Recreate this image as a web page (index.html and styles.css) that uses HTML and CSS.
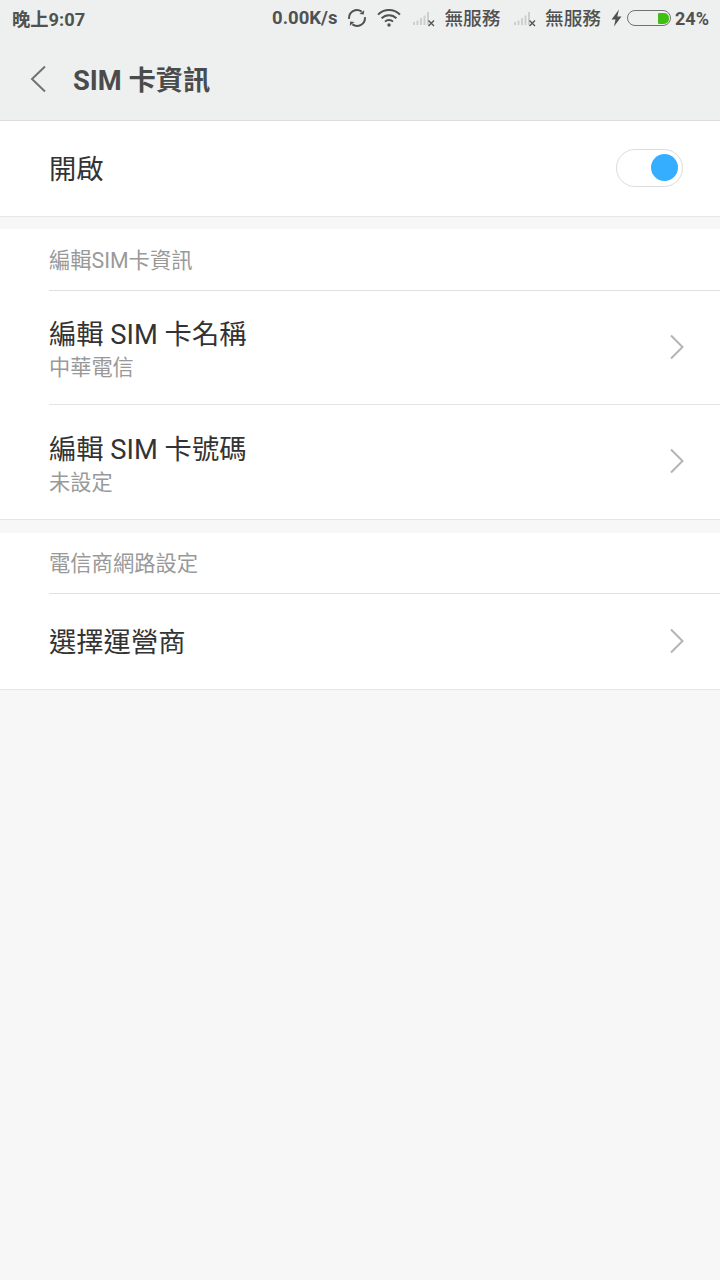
FILE: index.html
```html
<!DOCTYPE html>
<html lang="zh-Hant">
<head>
<meta charset="utf-8">
<title>SIM 卡資訊</title>
<link rel="stylesheet" href="styles.css">
</head>
<body>
<header class="top">
  <div class="status">
    <span class="time">晚上9:07</span>
    <div class="status-right">
      <span class="speed">0.00K/s</span>
      <svg class="ic-sync" width="20" height="20" viewBox="0 0 20 20" fill="none" stroke="#505252" stroke-width="2"><path d="M2.100 10.800A7.900 7.900 0 0 1 14.600 3.600"/><path d="M17.900 9.200A7.900 7.900 0 0 1 5.400 16.400"/><path d="M17.200 2.200l-.4 4.300-4.300-.6z" fill="#505252" stroke="none"/><path d="M2.800 17.800l.4-4.300 4.300.6z" fill="#505252" stroke="none"/></svg>
      <svg class="ic-wifi" width="24" height="18" viewBox="0 0 24 18" fill="none" stroke="#505252" stroke-width="2"><path d="M1 5.600a15.600 15.600 0 0 1 22 0"/><path d="M4.600 9.200a10.500 10.500 0 0 1 14.800 0"/><path d="M8 12.600a5.600 5.600 0 0 1 8 0"/><circle cx="12" cy="16" r="1.700" fill="#505252" stroke="none"/></svg>
      <svg class="ic-signal" width="24" height="18" viewBox="0 0 24 18"><g fill="#cdcfcf"><rect x="1" y="13" width="2" height="3"/><rect x="4.500" y="11.500" width="2" height="4.500"/><rect x="8" y="9" width="2" height="7"/><rect x="11.500" y="6.500" width="2" height="9.500"/><rect x="15" y="3" width="2" height="13"/></g><path d="M16.500 11.500l5.500 5.500m0-5.500l-5.500 5.500" stroke="#505252" stroke-width="1.300"/></svg>
      <span class="carrier">無服務</span>
      <svg class="ic-signal ic-signal-2" width="24" height="18" viewBox="0 0 24 18"><g fill="#cdcfcf"><rect x="1" y="13" width="2" height="3"/><rect x="4.500" y="11.500" width="2" height="4.500"/><rect x="8" y="9" width="2" height="7"/><rect x="11.500" y="6.500" width="2" height="9.500"/><rect x="15" y="3" width="2" height="13"/></g><path d="M16.500 11.500l5.500 5.500m0-5.500l-5.500 5.500" stroke="#505252" stroke-width="1.300"/></svg>
      <span class="carrier">無服務</span>
      <svg class="ic-bolt" width="11" height="18" viewBox="0 0 11 18"><path d="M8 .5L.5 10.500h4L3 17.500l7.500-10h-4.200z" fill="#505252"/></svg>
      <span class="battery"><span class="battery-fill"></span></span>
      <span class="percent">24%</span>
    </div>
  </div>
  <div class="titlebar">
    <svg class="back" width="18" height="28" viewBox="0 0 18 28" fill="none" stroke="#707272" stroke-width="2"><path d="M16 1.500L3 14l13 12.500"/></svg>
    <h1 class="title">SIM 卡資訊</h1>
  </div>
</header>

<main>
  <section class="card">
    <div class="row row-switch">
      <span class="row-title">開啟</span>
      <span class="switch"><span class="knob"></span></span>
    </div>
  </section>

  <section class="card card-wide-gap">
    <div class="group-label group-label-a">編輯SIM卡資訊</div>
    <div class="row row-tall">
      <div class="row-text">
        <span class="row-title">編輯 SIM 卡名稱</span>
        <span class="row-sub">中華電信</span>
      </div>
      <svg class="chevron" width="16" height="26" viewBox="0 0 16 26" fill="none" stroke="#b4b4b4" stroke-width="2"><path d="M2 1.500L13.500 13 2 24.500"/></svg>
    </div>
    <div class="row row-tall row-last">
      <div class="row-text">
        <span class="row-title">編輯 SIM 卡號碼</span>
        <span class="row-sub">未設定</span>
      </div>
      <svg class="chevron" width="16" height="26" viewBox="0 0 16 26" fill="none" stroke="#b4b4b4" stroke-width="2"><path d="M2 1.500L13.500 13 2 24.500"/></svg>
    </div>
  </section>

  <section class="card">
    <div class="group-label">電信商網路設定</div>
    <div class="row row-plain row-last">
      <span class="row-title">選擇運營商</span>
      <svg class="chevron" width="16" height="26" viewBox="0 0 16 26" fill="none" stroke="#b4b4b4" stroke-width="2"><path d="M2 1.500L13.500 13 2 24.500"/></svg>
    </div>
  </section>
</main>
</body>
</html>
```
FILE: styles.css
```css
* { box-sizing: border-box; }

html, body {
  margin: 0;
  height: 100%;
}

body {
  background: #f7f7f7;
  font-family: Roboto, "Noto Sans CJK TC", sans-serif;
  color: #333;
  overflow: hidden;
}

/* Status bar and title share one grey block */
.top {
  height: 121px;
  background: #eef0f0;
  border-bottom: 1px solid #dcdcdc;
}

.status {
  height: 36px;
  padding: 0 11px 0 12px;
  margin-bottom: 1px;
  display: flex;
  align-items: center;
  justify-content: space-between;
  color: #505252;
  font-size: 18.300px;
  font-weight: 700;
}

.status-right {
  display: flex;
  align-items: center;
}

.speed { margin-right: 10px; font-size: 18.500px; }
.ic-sync { margin-right: 10px; }
.ic-wifi { margin-right: 11px; }
.ic-signal { margin-right: 8px; }
.ic-signal-2 { margin-left: 12.500px; }

.carrier {
  font-size: 18.700px;
  font-weight: 500;
  margin-bottom: 3px;
}

.ic-bolt { margin: 0 5px 0 10px; }

.battery {
  width: 44px;
  height: 16px;
  border: 1.500px solid #707272;
  border-radius: 8px;
  padding: 1.500px;
  display: flex;
  justify-content: flex-end;
  margin-right: 4px;
}

.battery-fill {
  width: 11px;
  background: #3fbf12;
  border-radius: 1px 5px 5px 1px;
}

.percent { font-size: 18px; }

.titlebar {
  height: 83px;
  display: flex;
  align-items: center;
  padding-left: 29px;
}

.back { flex: none; }

.title {
  margin: 0 0 2px 26px;
  font-size: 27.300px;
  font-weight: 700;
  color: #4a4c4c;
}

/* Settings groups */
.card {
  background: #fff;
  border-bottom: 1px solid #e6e6e6;
  margin-bottom: 12px;
}

.card-wide-gap { margin-bottom: 13px; }

.row {
  margin-left: 49px;
  padding-right: 35px;
  display: flex;
  align-items: center;
  justify-content: space-between;
  border-bottom: 1px solid #e4e4e4;
}

.row-last { border-bottom: 0; }

.row-switch {
  height: 95px;
  border-bottom: 0;
}

.row-tall { height: 114px; }
.row-plain { height: 95px; }

.row-text {
  display: flex;
  flex-direction: column;
  padding-top: 2px;
}

.row-title {
  font-size: 27.300px;
  line-height: 36px;
  color: #333;
  padding-top: 3px;
}

.row-sub {
  font-size: 21.200px;
  line-height: 30px;
  color: #999;
}

.group-label {
  height: 61px;
  margin-left: 49px;
  padding-bottom: 3px;
  display: flex;
  align-items: center;
  border-bottom: 1px solid #e0e0e0;
  font-size: 21.300px;
  color: #999;
}

.group-label-a { height: 62px; padding-bottom: 3px; }

.chevron { flex: none; margin-bottom: 2px; }

.switch {
  width: 67px;
  height: 38px;
  margin: 0 2px 2px 0;
  border: 1px solid #dcdcdc;
  border-radius: 20px;
  background: #fff;
  display: flex;
  align-items: center;
  justify-content: flex-end;
  padding-right: 4px;
}

.knob {
  width: 27px;
  height: 27px;
  border-radius: 50%;
  background: #35aeff;
}
```
